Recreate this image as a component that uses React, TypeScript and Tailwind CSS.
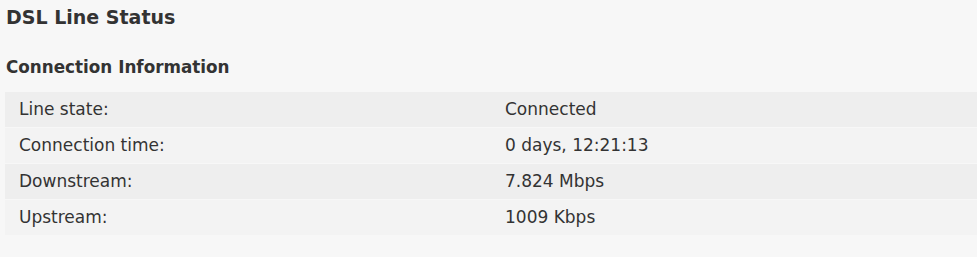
const rows = [
  { label: 'Line state:', value: 'Connected' },
  { label: 'Connection time:', value: '0 days, 12:21:13' },
  { label: 'Downstream:', value: '7.824 Mbps' },
  { label: 'Upstream:', value: '1009 Kbps' },
];

export default function App() {
  return (
    <div className="min-h-[257px] bg-[#f7f7f7] pl-[6px] pt-[5px] text-[#333333] font-['DejaVu_Sans',Verdana,sans-serif]">
      <h1 className="text-[19px] font-bold leading-[24px]">DSL Line Status</h1>
      <h2 className="mt-[26px] text-[16.8px] font-bold leading-[24px]">Connection Information</h2>
      <div className="mt-[13px] ml-[-1px] flex flex-col gap-[1px]">
        {rows.map((row, i) => (
          <div
            key={row.label}
            className={`grid h-[35px] grid-cols-2 items-center text-[17px] ${
              i % 2 === 0 ? 'bg-[#eeeeee]' : 'bg-[#f3f3f3]'
            }`}
          >
            <div className="pl-[14px]">{row.label}</div>
            <div className="pl-[14px]">{row.value}</div>
          </div>
        ))}
      </div>
    </div>
  );
}
